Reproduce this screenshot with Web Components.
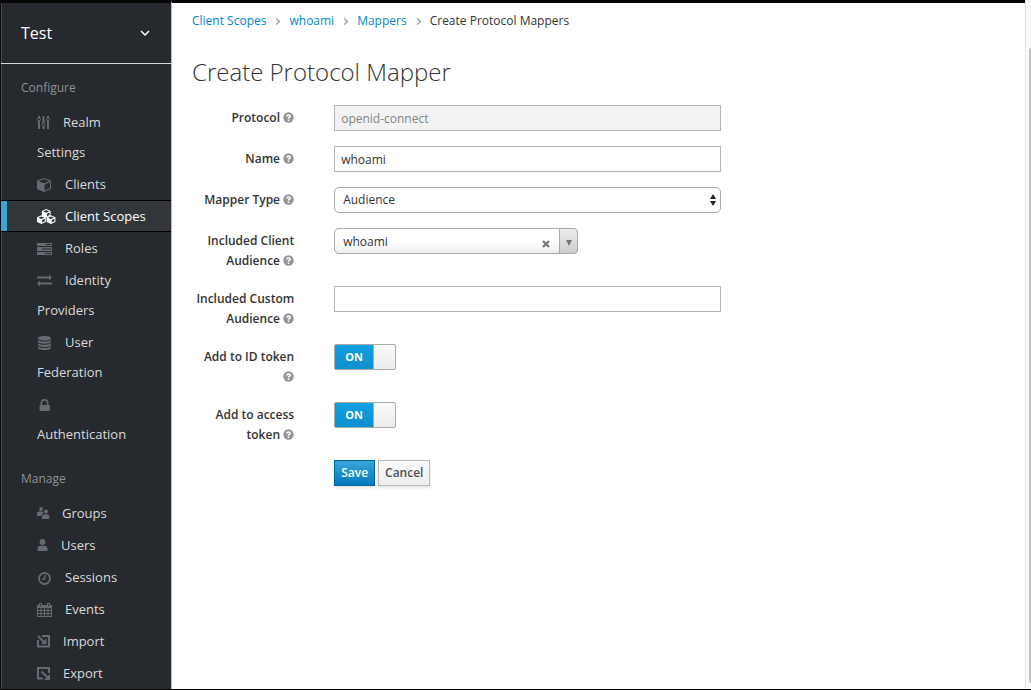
<!DOCTYPE html>
<html lang="en">
<head>
<meta charset="utf-8">
<title>Create Protocol Mapper</title>
<style>
  body { margin: 0; font: 12px/20px "Open Sans", "Noto Sans", sans-serif; color: #333; background: #fff; }
</style>
</head>
<body>
<admin-app></admin-app>
<script>
const define = (name, markup, setup) => {
  customElements.define(name, class extends HTMLElement {
    constructor() {
      super();
      this.attachShadow({ mode: "open" }).innerHTML = markup;
    }
    connectedCallback() { if (setup) setup(this, this.shadowRoot); }
  });
};

/* Menu glyphs: [advance width, markup]; a glyph may be drawn wider than its advance */
const glyphs = {
  sliders: [13, '<g fill="none" stroke="currentColor"><path d="M2 1v2M2 6v8M6.500 1v7M6.500 11v3M11 1v2M11 6v8" stroke-width="2"/><circle cx="2" cy="4.500" r="1.500"/><circle cx="6.500" cy="9.500" r="1.500"/><circle cx="11" cy="4.500" r="1.500"/></g>'],
  cube: [15, '<path fill="currentColor" fill-rule="evenodd" d="M7 1 13.300 3.300Q14 3.600 14 4.400V11.200Q14 12 13.300 12.300L7 15 .7 12.300Q0 12 0 11.200V4.400Q0 3.600.7 3.300ZM7 2.100 1.600 4.200 7 6.300 12.400 4.200ZM7.600 7.400V13.500L13 11.200V5.300Z"/>'],
  cubes: [15, '<g fill="currentColor" fill-rule="evenodd"><path d="M9.200 0 13.600 1.900V6.700L9.200 8.800 4.800 6.700V1.900ZM9.200 1.100 6.200 2.400 9.200 3.700 12.200 2.400ZM9.900 4.700V7.300L12.600 6V3.500Z"/><path d="M4.400 6.300 8.800 8.200V13L4.400 15.100 0 13V8.200ZM4.400 7.400 1.400 8.700 4.400 10 7.400 8.700ZM5.100 11V13.600L7.800 12.300V9.800Z"/><path d="M14 6.300 18.400 8.200V13L14 15.100 9.600 13V8.200ZM14 7.400 11 8.700 14 10 17 8.700ZM14.700 11V13.600L17.400 12.300V9.800Z"/></g>'],
  tasks: [15, '<path fill="currentColor" fill-rule="evenodd" d="M0 2h15v3H0ZM9 3v1h5V3ZM0 6h15v4H0ZM5 7.500v1h9v-1ZM0 11h15v3H0ZM8 12v1H14v-1Z"/>'],
  exchange: [15, '<path fill="currentColor" d="M0 3.500h12V1.500l3 3-3 3V5.500H0ZM15 9.500H3V7.500l-3 3 3 3v-2h12Z"/>'],
  database: [15, '<path fill="currentColor" d="M1 3.300C1 1.800 4 1 7.500 1S14 1.800 14 3.300 11 5.500 7.500 5.500 1 4.800 1 3.300ZM1 5q2 1.500 6.500 1.500T14 5v1.500C14 8 11 8.700 7.500 8.700S1 8 1 6.500ZM1 8.200q2 1.500 6.500 1.500T14 8.200v1.500c0 1.500-3 2.200-6.500 2.200S1 11.200 1 9.700ZM1 11.400q2 1.500 6.500 1.500t6.500-1.500v1.400c0 1.500-3 2.200-6.500 2.200S1 14.300 1 12.800Z"/>'],
  lock: [15, '<path fill="currentColor" fill-rule="evenodd" d="M3.500 8V6a4 4 0 0 1 8 0v2h.5q.8 0 .8.800v4.400q0 .8-.8.800H3.300q-.8 0-.8-.8V8.800q0-.8.8-.8ZM5.200 8h4.600V6a2.300 2.300 0 0 0-4.600 0Z"/>'],
  group: [12, '<g fill="currentColor"><circle cx="4" cy="3" r="1.900"/><circle cx="9" cy="5.600" r="2"/><path d="M0 10V7.500Q0 5.500 2 5.500H5Q6.200 5.500 6.300 6.800L4 10ZM5 13V11Q5 8.300 7.500 8.300H10Q12.300 8.300 12.300 11V13Z"/></g>'],
  user: [11, '<g fill="currentColor"><circle cx="5.500" cy="4" r="2.900"/><path d="M.5 13V11Q.5 7.700 3.300 7.700H7.700Q10.500 7.700 10.500 11V13Z"/></g>'],
  clock: [15, '<circle cx="7.500" cy="8.500" r="5.500" fill="none" stroke="currentColor" stroke-width="1.800"/><path d="M7.800 5v4H5" fill="none" stroke="currentColor" stroke-width="1.300"/>'],
  calendar: [15, '<path fill="currentColor" fill-rule="evenodd" d="M0 3h2V1h3v2h5V1h3v2h2v12H0ZM3 2v2h1V2ZM11 2v2h1V2ZM1 6v2h2.500V6ZM4.500 6v2H7V6ZM8 6v2h2.500V6ZM11.500 6v2H14V6ZM1 9v2h2.500V9ZM4.500 9v2H7V9ZM8 9v2h2.500V9ZM11.500 9v2H14V9ZM1 12v2h2.500v-2ZM4.500 12v2H7v-2ZM8 12v2h2.500v-2ZM11.500 12v2H14v-2Z"/>'],
  import: [13, '<path d="M5 2h7v10.500H1V6" fill="none" stroke="currentColor" stroke-width="2"/><path d="M1 2l7 7" stroke="currentColor" stroke-width="2"/><path d="M9.500 4.500V10H4Z" fill="currentColor"/>'],
  export: [13, '<path d="M12 7V2H1v10.500H6" fill="none" stroke="currentColor" stroke-width="2"/><path d="M4.500 5.500l6 6" stroke="currentColor" stroke-width="2"/><path d="M13 8V14H7Z" fill="currentColor"/>']
};

define("nav-item", `
<style>
  :host { display: block; color: #dbdbdb; --glyph: #656b71; }
  a { display: block; padding: 0 20px 0 36px; border: solid transparent; border-width: 1px 0;
      font-size: 13px; line-height: 30px; color: inherit; text-decoration: none; }
  :host([active]) { color: #fff; --glyph: #fff; }
  :host([active]) a { border-color: #000; background: linear-gradient(90deg, #39a5dc 6px, #31363b 6px); }
  svg { height: 16px; margin-right: 13px; vertical-align: -4px; overflow: visible; color: var(--glyph); }
</style>
<a href="#"><svg aria-hidden="true"></svg><slot></slot></a>`, (host, root) => {
  const [advance, art] = glyphs[host.getAttribute("icon")];
  const svg = root.querySelector("svg");
  svg.setAttribute("width", advance);
  svg.innerHTML = art;
  if (host.hasAttribute("active")) root.querySelector("a").setAttribute("aria-current", "page");
});

define("nav-group", `
<style>
  :host { display: block; }
  h2 { margin: 0; padding: 14px 20px 8px; font-size: 12px; line-height: 20px; font-weight: 400; color: #929292; }
  :host(:not(:first-of-type)) h2 { padding-top: 19px; }
</style>
<h2></h2><slot></slot>`, (host, root) => {
  root.querySelector("h2").textContent = host.getAttribute("heading");
});

define("side-bar", `
<style>
  :host { display: block; box-sizing: border-box; background: #26292e; border-right: 1px solid #b8babb; }
  .realm { display: flex; align-items: center; justify-content: space-between; box-sizing: border-box; width: 100%; height: 61px;
           padding: 0 20px; border: 0; border-bottom: 1px solid #d8d9da; background: none; color: #fff; font: inherit; font-size: 16px; }
</style>
<button class="realm" type="button">Test
  <svg width="12" height="8" viewBox="0 0 12 8" aria-hidden="true"><path d="M2 2l4 4 4-4" fill="none" stroke="#fff" stroke-width="1.500"/></svg>
</button>
<nav>
  <nav-group heading="Configure">
    <nav-item icon="sliders">Realm Settings</nav-item>
    <nav-item icon="cube">Clients</nav-item>
    <nav-item icon="cubes" active>Client Scopes</nav-item>
    <nav-item icon="tasks">Roles</nav-item>
    <nav-item icon="exchange">Identity Providers</nav-item>
    <nav-item icon="database">User Federation</nav-item>
    <nav-item icon="lock">Authentication</nav-item>
  </nav-group>
  <nav-group heading="Manage">
    <nav-item icon="group">Groups</nav-item>
    <nav-item icon="user">Users</nav-item>
    <nav-item icon="clock">Sessions</nav-item>
    <nav-item icon="calendar">Events</nav-item>
    <nav-item icon="import">Import</nav-item>
    <nav-item icon="export">Export</nav-item>
  </nav-group>
</nav>`);

define("bread-crumbs", `
<style>
  :host { display: block; padding: 8px 20px 0; }
  ol { display: flex; margin: 0; padding: 0; list-style: none; }
  li { display: flex; align-items: center; }
  li + li::before { content: ""; box-sizing: border-box; width: 5px; height: 5px; margin: 0 10px 0 8px;
                    border: solid #888; border-width: 1px 1px 0 0; rotate: 45deg; }
  a { color: #0088ce; text-decoration: none; }
</style>
<nav aria-label="Breadcrumb"><ol>
  <li><a href="#">Client Scopes</a></li><li><a href="#">whoami</a></li><li><a href="#">Mappers</a></li><li>Create Protocol Mappers</li>
</ol></nav>`);

define("help-tip", `
<style>
  :host { display: inline-block; height: 12px; width: 11px; vertical-align: -2px; }
  svg { display: block; }
</style>
<svg width="11" height="12" viewBox="0 0 11 12" role="img" aria-label="Help"><circle cx="5.500" cy="5.500" r="5.200" fill="#939597"/><path d="M3.800 4.400Q3.800 2.900 5.500 2.900T7.200 4.300Q7.200 5 6.300 5.500T5.500 6.700M5.500 7.500v1.400" fill="none" stroke="#fff" stroke-width="1.500"/></svg>`);

define("form-row", `
<style>
  :host { display: grid; grid-template-columns: minmax(0, 2fr) minmax(0, 6fr) minmax(0, 4fr); margin-bottom: 15px; }
  .label { padding: 3px 20px 0; text-align: right; font-weight: 600; }
  .field { padding: 0 20px; min-height: 26px; }
</style>
<div class="label"><slot name="label"></slot></div><div class="field"><slot></slot></div>`);

define("mapper-form", `
<style>
  :host { display: block; }
  input, select { display: block; box-sizing: border-box; width: 100%; height: 26px; font: inherit; color: #333; outline: 0; }
  .text { padding: 2px 6px; border: 1px solid #b4b4b4; border-radius: 0; background: #fff; }
  .text:disabled { color: #828486; background: #f2f2f2; }
  select { appearance: none; border: 1px solid #aaa; border-radius: 5px; padding: 0 8px; }
  .native { background: #fff url("data:image/svg+xml,%3Csvg xmlns='http://www.w3.org/2000/svg' width='6' height='12'%3E%3Cpath d='M0 5 3 0 6 5ZM0 7 3 12 6 7Z' fill='%23222'/%3E%3C/svg%3E") no-repeat right 4px center; }
  .combo { display: grid; grid-template-columns: 1fr 22px 19px; width: 244px; }
  .combo select { grid-area: 1 / 1 / 2 / 4; padding-top: 2px; background: linear-gradient(#fff 50%, #eee); }
  .clear { grid-area: 1 / 2; z-index: 1; display: grid; place-items: center start; padding: 5px 0 0 5px; border: 0; background: none; }
  .arrow { grid-area: 1 / 3; z-index: 1; display: grid; place-items: center; padding-top: 3px; box-sizing: border-box; height: 26px; pointer-events: none;
           border: 1px solid #aaa; border-radius: 0 4px 4px 0; background: linear-gradient(#eee, #ccc); }
  .toggle { display: grid; grid-template-columns: 40px 22px; box-sizing: border-box; width: 62px; }
  .toggle input { grid-area: 1 / 1 / 2 / 3; appearance: none; margin: 0; width: 62px; border: 1px solid #aaa; border-radius: 2px;
                  background: linear-gradient(90deg, transparent 38px, #aaa 38px, #aaa 39px, transparent 39px) , linear-gradient(#fafafa, #ececec); }
  .toggle span { grid-area: 1 / 1; margin: 1px; display: grid; place-items: center; z-index: 1; color: #fff; font-size: 11px; font-weight: 700;
                 background: linear-gradient(#0f9fe3, #108fcd); }
  .actions { display: flex; gap: 3px; }
  .actions button { box-sizing: border-box; height: 26px; padding: 0 6px; border: 1px solid #b7b7b7; font: inherit; font-weight: 600; color: #4d5258;
                    background: linear-gradient(#fafafa, #ededed); box-shadow: 0 2px 3px #0000001a; }
  .actions .primary { color: #fff; border-color: #00659c; background: linear-gradient(#39a5dc, #0079be); }
</style>
<form>
  <form-row><label slot="label" for="protocol">Protocol <help-tip></help-tip></label><input class="text" id="protocol" value="openid-connect" disabled></form-row>
  <form-row><label slot="label" for="name">Name <help-tip></help-tip></label><input class="text" id="name" value="whoami"></form-row>
  <form-row><label slot="label" for="type">Mapper Type <help-tip></help-tip></label><select class="native" id="type"><option>Audience</option></select></form-row>
  <form-row><label slot="label" for="client">Included Client Audience <help-tip></help-tip></label>
    <div class="combo"><select id="client"><option>whoami</option></select>
      <button class="clear" type="button" aria-label="Clear"><svg width="8" height="8" viewBox="0 0 8 8"><path d="M1 1l6 6M7 1 1 7" stroke="#777" stroke-width="2.200"/></svg></button>
      <span class="arrow"><svg width="6" height="6" viewBox="0 0 6 6"><path d="M0 0h6L3 6Z" fill="#777"/></svg></span></div></form-row>
  <form-row><label slot="label" for="custom">Included Custom Audience <help-tip></help-tip></label><input class="text" id="custom"></form-row>
  <form-row><label slot="label" for="idtoken">Add to ID token <help-tip></help-tip></label><label class="toggle"><input type="checkbox" id="idtoken" checked><span>ON</span></label></form-row>
  <form-row><label slot="label" for="access">Add to access token <help-tip></help-tip></label><label class="toggle"><input type="checkbox" id="access" checked><span>ON</span></label></form-row>
  <form-row><div class="actions"><button class="primary" type="button">Save</button><button type="button">Cancel</button></div></form-row>
</form>`);

define("scroll-gutter", `
<style>
  :host { display: flex; justify-content: flex-end; box-sizing: border-box; padding: 48px 0 6px; border-left: 1px solid #e4e4e4; background: #fafafa; }
  i { width: 2px; border-radius: 2px 0 0 2px; background: #c1c1c1; }
</style><i></i>`);

define("admin-app", `
<style>
  :host { display: grid; grid-template-columns: 171px minmax(0, 1fr) 6px; box-sizing: border-box; min-height: 100vh;
          border-left: 1px solid #0c0c0d; border-bottom: 1px solid #000; }
  side-bar, main { border-top: 3px solid #050505; }
  side-bar { box-shadow: inset 1px 0 #46494d; }
  h1 { margin: 0; padding: 23px 20px 16px; font-size: 24px; line-height: 35px; font-weight: 300; }
</style>
<side-bar></side-bar>
<main>
  <bread-crumbs></bread-crumbs>
  <h1>Create Protocol Mapper</h1>
  <mapper-form></mapper-form>
</main>
<scroll-gutter></scroll-gutter>`);
</script>
</body>
</html>
